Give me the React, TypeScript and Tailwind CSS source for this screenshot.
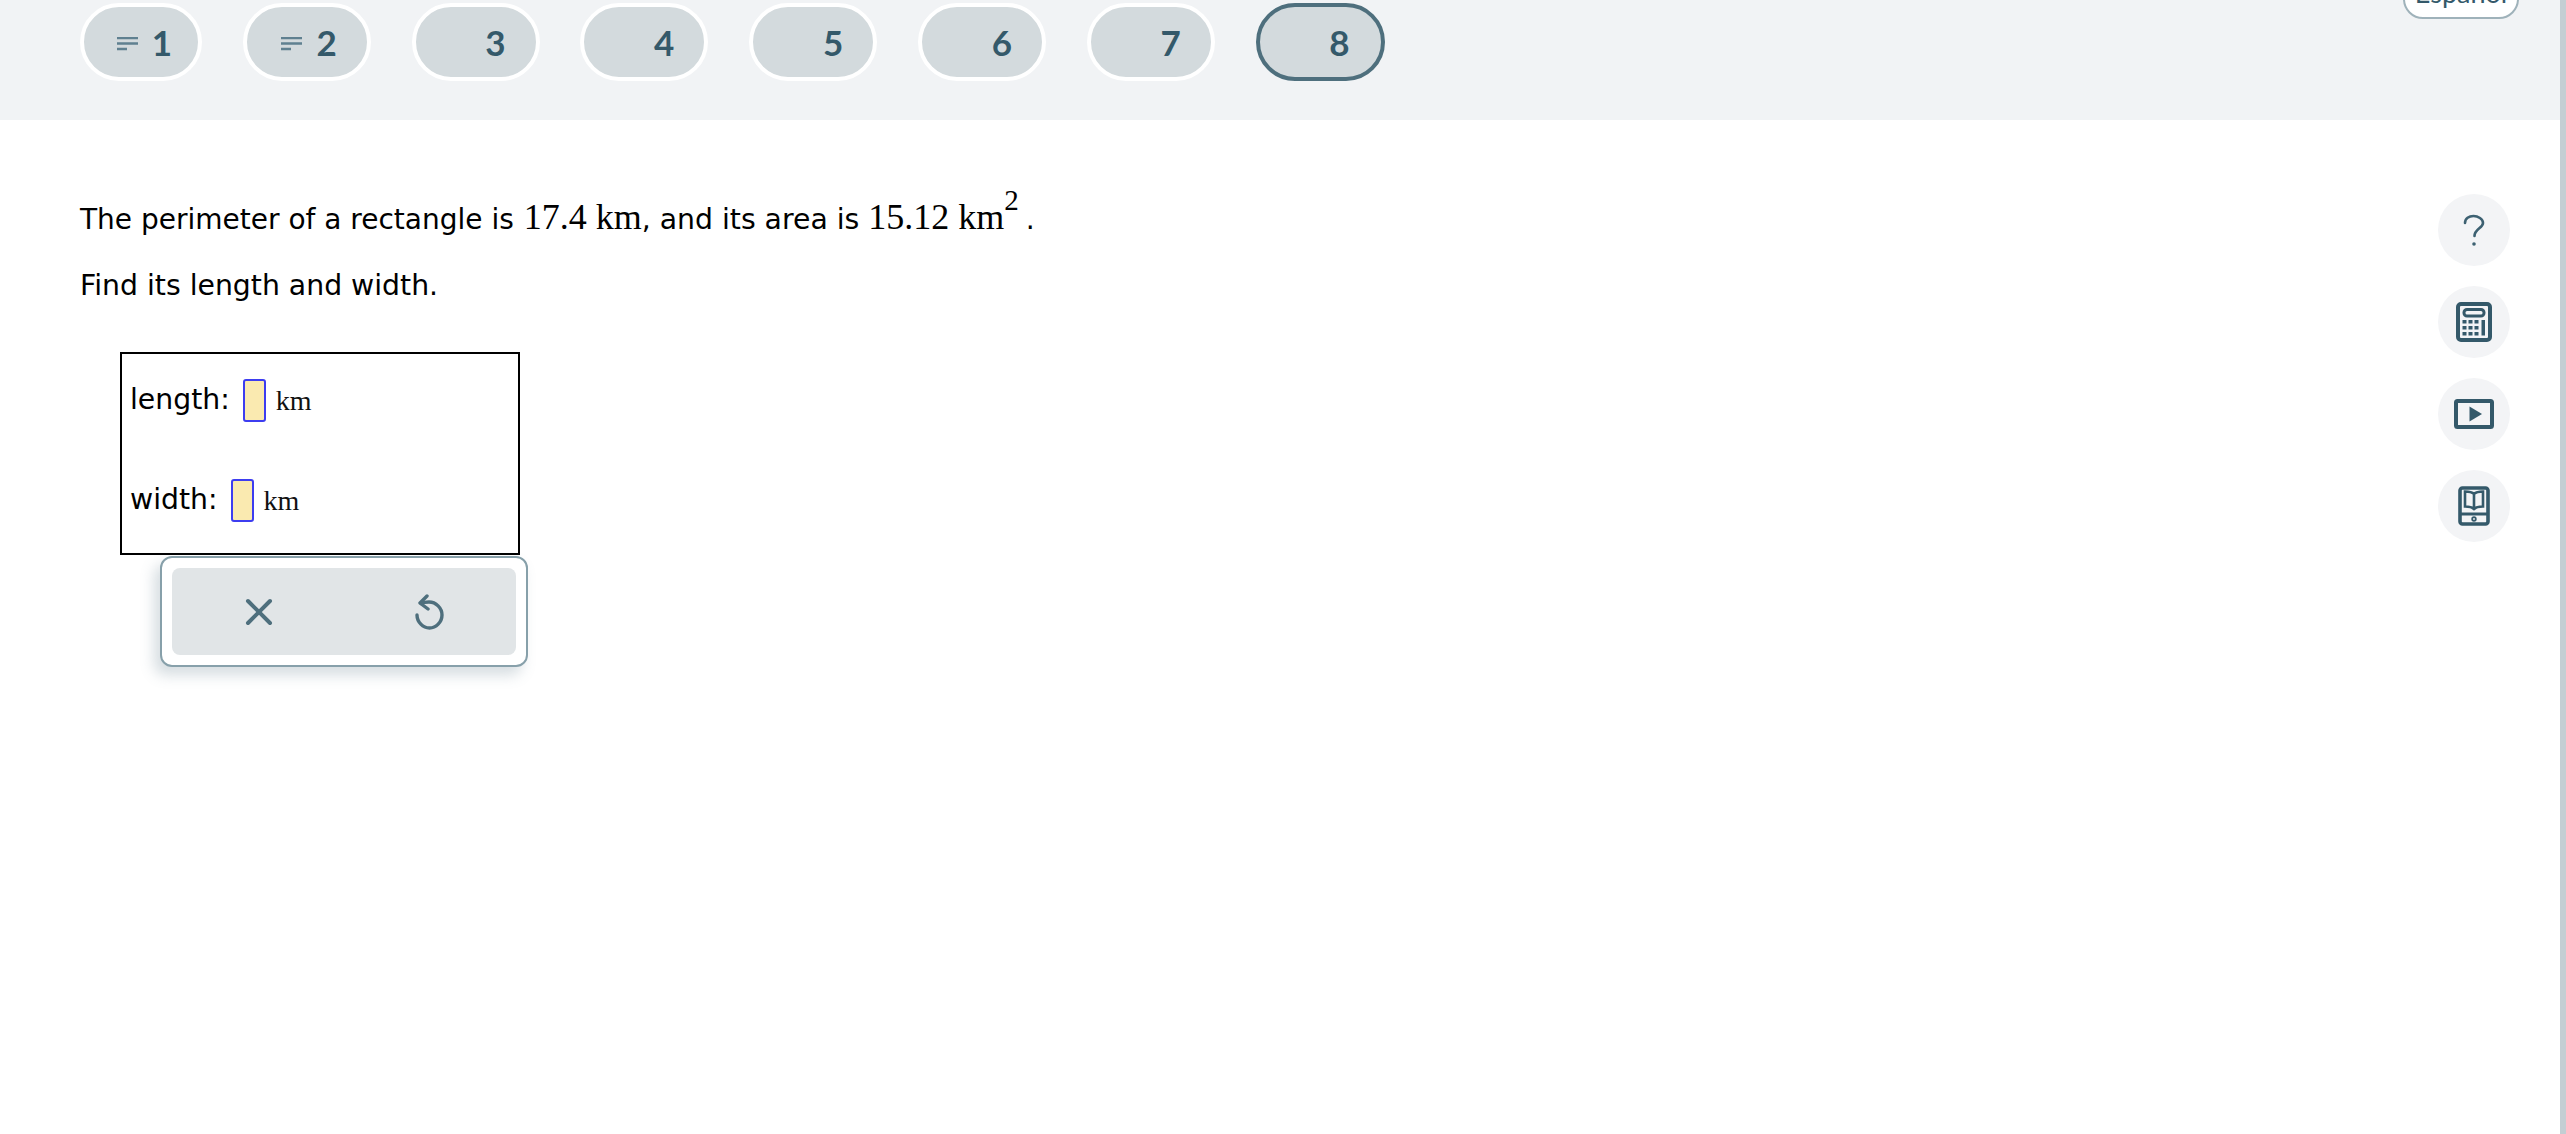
import React from "react";

const serif = "font-['Liberation_Serif',serif]";

function Pill({ n, mark, active, w, pr }: { n: number; mark?: boolean; active?: boolean; w: string; pr: string }) {
  return (
    <div
      className={`h-[78px] rounded-[39px] border-[4px] bg-[#d3dadd] flex items-center justify-end gap-[14px] text-[35px] font-bold leading-none text-[#34596a] font-['Lato',sans-serif] ${w} ${pr} ${
        active ? "border-[#4e6f7d]" : "border-white"
      }`}
    >
      {mark && (
        <svg width="21" height="14" viewBox="0 0 21 14" className="mt-[3px]">
          <path d="M0 1h21M0 6.500h21M0 12h10" stroke="#5f8090" strokeWidth="2.600" fill="none" />
        </svg>
      )}
      <span>{n}</span>
    </div>
  );
}

function ToolBtn({ children }: { children: React.ReactNode }) {
  return <div className="w-[72px] h-[72px] rounded-full bg-[#f3f4f6] flex items-center justify-center">{children}</div>;
}

function Field({ label }: { label: string }) {
  return (
    <div className="flex items-center h-[43px]">
      <span className="text-[28.3px] leading-none">{label}:</span>
      <span className="ml-[13px] w-[23px] h-[43px] bg-[#faeab0] border-[2.5px] border-[#3d3df0] rounded-[3px]" />
      <span className={`ml-[10px] text-[28px] leading-none text-[#111] ${serif}`}>km</span>
    </div>
  );
}

export default function App() {
  return (
    <div className="relative flex w-full h-[1134px] overflow-hidden bg-white text-black font-['DejaVu_Sans',sans-serif]">
      <div className="flex-1 min-w-0 flex flex-col">
        <header className="relative h-[120px] shrink-0 bg-[#f1f3f5] pl-[80px] pt-[3px]">
          <div className="flex gap-[40.8px]">
            <Pill n={1} mark w="w-[122px]" pr="pr-[26px]" />
            <Pill n={2} mark w="w-[128px]" pr="pr-[30px]" />
            <Pill n={3} w="w-[128px]" pr="pr-[30px]" />
            <Pill n={4} w="w-[128px]" pr="pr-[30px]" />
            <Pill n={5} w="w-[128px]" pr="pr-[30px]" />
            <Pill n={6} w="w-[128px]" pr="pr-[30px]" />
            <Pill n={7} w="w-[128px]" pr="pr-[30px]" />
            <Pill n={8} active w="w-[129px]" pr="pr-[31px]" />
          </div>
          <div className="absolute left-[2403px] top-[-31px] w-[116px] h-[50px] rounded-[20px] border-2 border-[#9fb2ba] bg-white text-[#34596a] text-[27px] leading-[44px] text-center font-['Lato',sans-serif]">
            Español
          </div>
        </header>

        <div className="flex flex-1 min-h-0">
          <main className="flex-1 pl-[80px] pt-[69px]">
            <p className="text-[28.3px] leading-[56px] h-[56px] whitespace-nowrap">
              <span className="text-[28px]">The perimeter of a rectangle is </span>
              <span className={`${serif} text-[36px] ml-[1px]`}>17.4 km</span>, and its area is{" "}
              <span className={`${serif} text-[36px]`}>
                15.12 km<sup className="text-[29px] top-[-4px] align-baseline -translate-y-[15px] inline-block">2</sup>
              </span>{" "}
              <span className="ml-[-2px]">.</span>
            </p>
            <p className="mt-[13px] text-[28.3px] leading-[56px]">Find its length and width.</p>

            <div className="relative ml-[40px] mt-[38px] w-[400px] h-[203px] border-2 border-black pl-[8px] pt-[25px] flex flex-col gap-[57px]">
              <Field label="length" />
              <Field label="width" />
              <div className="absolute left-[38px] top-[202px] w-[368px] h-[111px] rounded-[12px] border-2 border-[#87a0aa] bg-white p-[10px] shadow-[-6px_8px_14px_rgba(90,120,135,0.25)]">
                <div className="h-full rounded-[8px] bg-[#e1e5e7] flex items-center justify-around">
                  <svg width="30" height="30" viewBox="0 0 30 30" fill="none" stroke="#4e6f7d" strokeWidth="4" strokeLinecap="round" className="ml-[1px]">
                    <path d="M4 4l22 22M26 4L4 26" />
                  </svg>
                  <svg width="30" height="36" viewBox="0 0 30 36" fill="none" stroke="#4e6f7d" strokeWidth="3.400" strokeLinecap="round" strokeLinejoin="round">
                    <path d="M12 2L5 9l8 6" />
                    <path d="M6 9.500c1-.5 4-1.500 8-1.500 7 0 13 6 13 13s-6 13-12.500 13S2 28 2 21" />
                  </svg>
                </div>
              </div>
            </div>
          </main>

          <aside className="w-[72px] mr-[50px] pt-[74px] flex flex-col gap-[20px] shrink-0">
            <ToolBtn>
              <svg width="24" height="34" viewBox="0 0 24 34" fill="none" stroke="#3d6172" strokeWidth="2.600" strokeLinecap="round" className="mt-[2px]">
                <path d="M3 9c0-4.500 4-7 8.500-7S21 5 21 9c0 5-8.500 6-8.500 13" />
                <circle cx="12" cy="30" r="1.800" fill="#3d6172" stroke="none" />
              </svg>
            </ToolBtn>
            <ToolBtn>
              <svg width="36" height="40" viewBox="0 0 36 40" fill="none">
                <rect x="2" y="2" width="32" height="36" rx="3" stroke="#34596a" strokeWidth="4" />
                <rect x="8" y="7.500" width="20" height="6.500" rx="3" stroke="#34596a" strokeWidth="3" />
                <path d="M6.500 18h4v3.500h-4zM12.500 18h4v3.500h-4zM18.500 18h4v3.500h-4zM6.500 24h4v3.500h-4zM12.500 24h4v3.500h-4zM18.500 24h4v3.500h-4zM6.500 30h4v3.500h-4zM12.500 30h4v3.500h-4zM18.500 30h4v3.500h-4zM25.500 18h3.500v15.500h-3.500z" fill="#34596a" />
              </svg>
            </ToolBtn>
            <ToolBtn>
              <svg width="40" height="30" viewBox="0 0 40 30" fill="none">
                <rect x="2" y="2" width="36" height="26" rx="1.500" stroke="#34596a" strokeWidth="4" />
                <path d="M15.500 7.500L28 15 15.500 22.500z" fill="#34596a" />
              </svg>
            </ToolBtn>
            <ToolBtn>
              <svg width="32" height="40" viewBox="0 0 32 40" fill="none" stroke="#34596a">
                <rect x="2" y="2" width="28" height="36" rx="2.500" strokeWidth="3.600" />
                <path d="M2 28h28" strokeWidth="3" />
                <path d="M16 8c-2-2-5-2.500-9-2.500v15c4 0 7 .5 9 2.500 2-2 5-2.500 9-2.500v-15c-4 0-7 .5-9 2.500zv15" strokeWidth="2.600" />
                <circle cx="16" cy="33" r="1.800" strokeWidth="1.800" />
              </svg>
            </ToolBtn>
          </aside>
        </div>
      </div>
      <div className="w-[6px] shrink-0 bg-[#c3ced3]" />
    </div>
  );
}
